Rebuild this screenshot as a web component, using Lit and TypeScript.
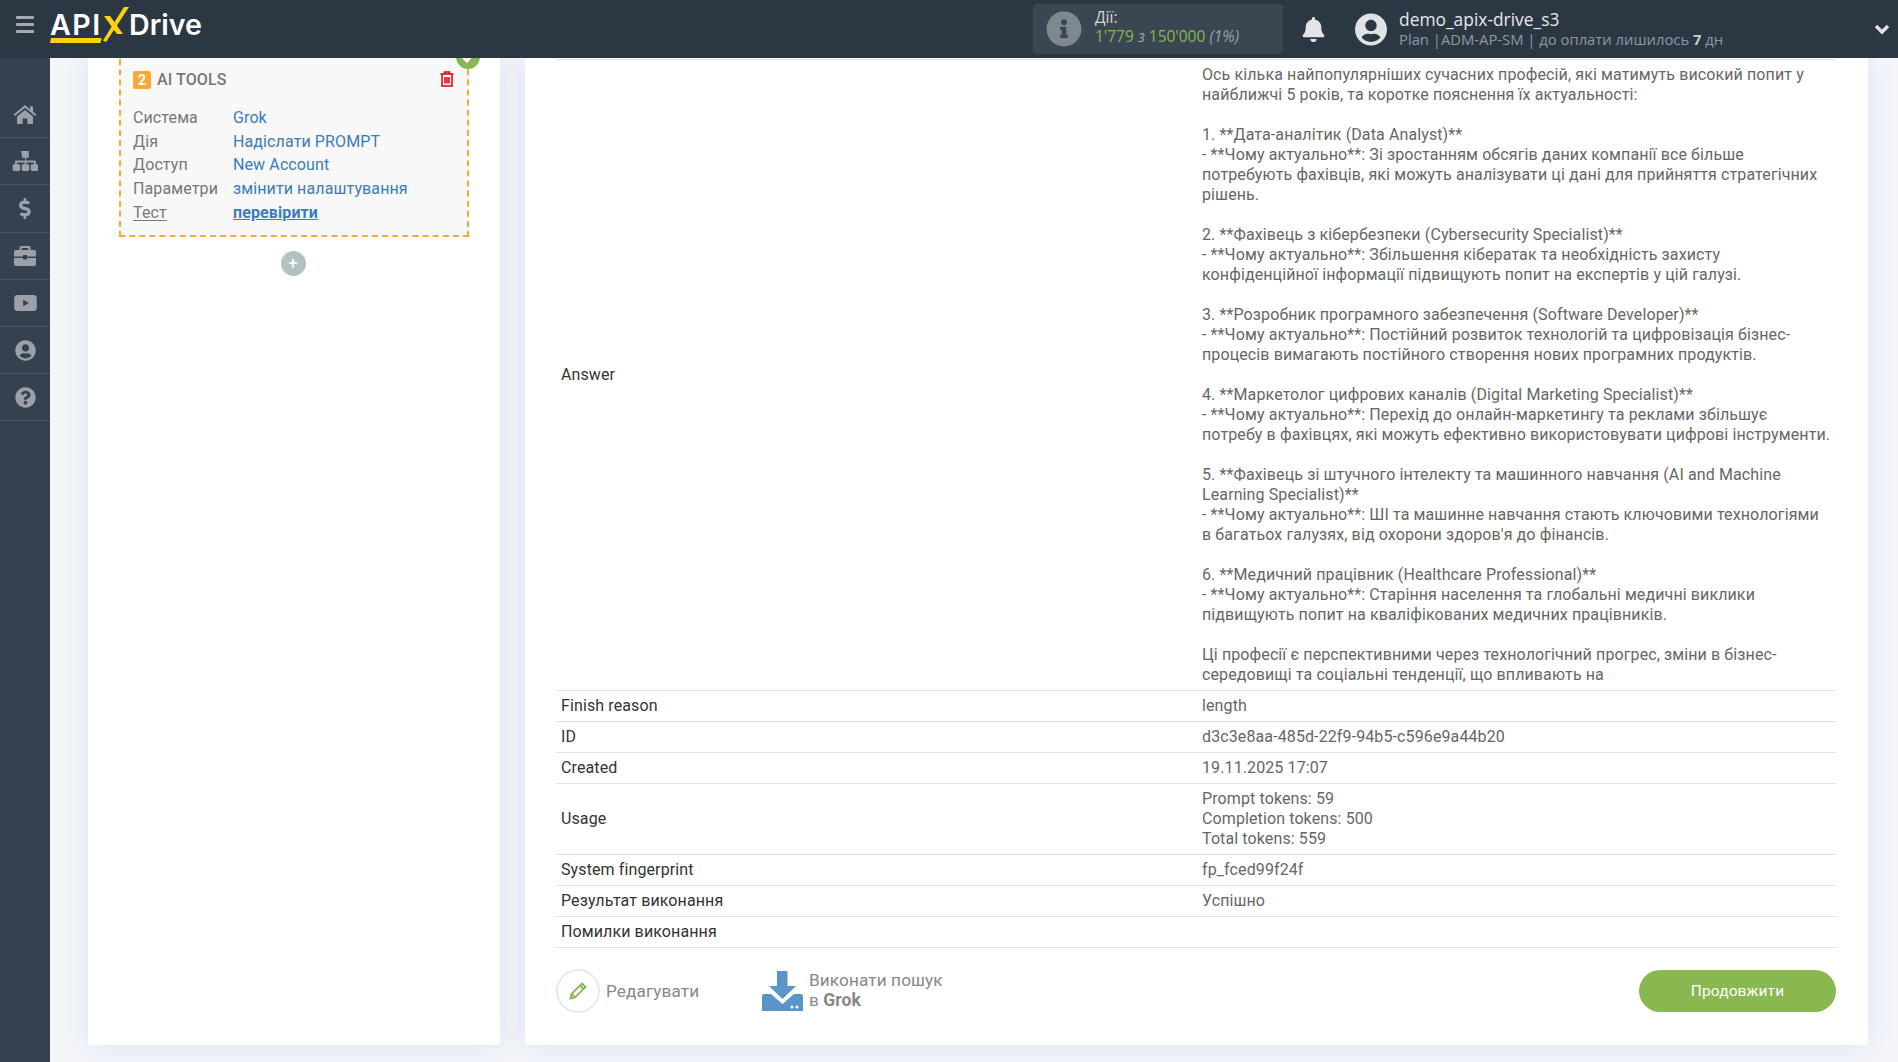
import { LitElement, html, css, svg } from 'lit';
import { customElement } from 'lit/decorators.js';

const ICONS: Record<string, { box: string; d: string }> = {
  home: {
    box: '0 0 24 20',
    d: 'M12 1L0.6 10.6l1.3 1.5L12 3.7l10.1 8.4 1.3-1.5-3.4-2.9V2.2h-3v3.4zM4 12.6V20h5.6v-5.6h4.8V20H20v-7.4l-8-6.7z',
  },
  sitemap: {
    box: '0 0 27 21',
    d: 'M9.5 0h8v7h-3v3h9a1.5 1.5 0 0 1 1.5 1.5V14h1a1.5 1.5 0 0 1 1.5 1.5v4a1.5 1.5 0 0 1-1.5 1.5h-5a1.5 1.5 0 0 1-1.5-1.5v-4a1.5 1.5 0 0 1 1.5-1.5h2v-2h-8v2h1.5a1.5 1.5 0 0 1 1.5 1.5v4a1.5 1.5 0 0 1-1.5 1.5h-5a1.5 1.5 0 0 1-1.5-1.5v-4a1.5 1.5 0 0 1 1.5-1.5h1.5v-2h-8v2h2a1.5 1.5 0 0 1 1.5 1.5v4a1.5 1.5 0 0 1-1.5 1.5h-5a1.5 1.5 0 0 1-1.5-1.5v-4a1.5 1.5 0 0 1 1.5-1.5h1v-2.5a1.5 1.5 0 0 1 1.5-1.5h9v-3h-3z',
  },
  dollar: {
    box: '0 0 320 512',
    d: 'M209.2 233.4l-108-31.6C88.7 198.2 80 186.5 80 173.5c0-16.3 13.2-29.5 29.5-29.5h66.3c12.2 0 24.2 3.7 34.2 10.5 6.1 4.1 14.3 3.1 19.5-2l34.8-34c7.1-6.9 6.1-18.4-1.8-24.5C238 74.8 207.4 64.1 176 64V16c0-8.8-7.2-16-16-16h-32c-8.8 0-16 7.2-16 16v48h-2.5C45.8 64-5.4 118.7.5 183.6c4.2 46.1 39.4 83.6 83.8 96.6l102.5 30c12.5 3.7 21.2 15.3 21.2 28.3 0 16.3-13.2 29.5-29.5 29.5h-66.3C100 368 88 364.3 78 357.5c-6.1-4.1-14.3-3.1-19.5 2l-34.8 34c-7.1 6.9-6.1 18.4 1.8 24.5 24.5 19.2 55.1 29.9 86.5 30v48c0 8.8 7.2 16 16 16h32c8.8 0 16-7.2 16-16v-48.2c46.6-.9 90.3-28.6 105.7-72.7 21.5-61.6-14.6-124.8-72.5-141.7z',
  },
  briefcase: {
    box: '0 0 22 20',
    d: 'M7 0h8a1.5 1.5 0 0 1 1.5 1.5V4H20a2 2 0 0 1 2 2v4.500H13v-1.500H9v1.500H0V6a2 2 0 0 1 2-2h3.500V1.500A1.500 1.500 0 0 1 7 0zm.6 2v2h6.800V2zM0 12h9v1.500h4V12h9v6a2 2 0 0 1-2 2H2a2 2 0 0 1-2-2z',
  },
  video: {
    box: '0 0 24 17',
    d: 'M3.500 0h17A3.500 3.500 0 0 1 24 3.500v10a3.500 3.500 0 0 1-3.500 3.500h-17A3.500 3.500 0 0 1 0 13.500v-10A3.500 3.500 0 0 1 3.500 0zM9.500 5v7l6-3.500z',
  },
  user: {
    box: '0 0 496 512',
    d: 'M248 8C111 8 0 119 0 256s111 248 248 248 248-111 248-248S385 8 248 8zm0 96c48.600 0 88 39.400 88 88s-39.400 88-88 88-88-39.400-88-88 39.400-88 88-88zm0 344c-58.700 0-111.300-26.600-146.500-68.200 18.800-35.400 55.600-59.800 98.500-59.800 2.400 0 4.800.4 7.100 1.100 13 4.200 26.600 6.900 40.900 6.900 14.300 0 28-2.700 40.900-6.900 2.300-.7 4.700-1.100 7.100-1.100 42.900 0 79.700 24.400 98.500 59.800C359.300 421.400 306.700 448 248 448z',
  },
  question: {
    box: '0 0 512 512',
    d: 'M504 256c0 136.997-111.043 248-248 248S8 392.997 8 256C8 119.083 119.043 8 256 8s248 111.083 248 248zM262.655 90c-54.497 0-89.255 22.957-116.549 63.758-3.536 5.286-2.353 12.415 2.715 16.258l34.699 26.310c5.205 3.947 12.621 3.008 16.665-2.122 17.864-22.658 30.113-35.797 57.303-35.797 20.429 0 45.698 13.148 45.698 32.958 0 14.976-12.363 22.667-32.534 33.976C247.128 238.528 216 254.941 216 296v4c0 6.627 5.373 12 12 12h56c6.627 0 12-5.373 12-12v-1.333c0-28.462 83.186-29.647 83.186-106.667 0-58.002-60.165-102-116.531-102zM256 338c-25.365 0-46 20.635-46 46 0 25.364 20.635 46 46 46s46-20.636 46-46c0-25.365-20.635-46-46-46z',
  },
  info: {
    box: '0 0 512 512',
    d: 'M256 8C119 8 8 119 8 256s111 248 248 248 248-111 248-248S393 8 256 8zm0 110a42 42 0 1 1 0 84 42 42 0 0 1 0-84zm56 254a12 12 0 0 1-12 12h-88a12 12 0 0 1-12-12v-24a12 12 0 0 1 12-12h12v-64h-12a12 12 0 0 1-12-12v-24a12 12 0 0 1 12-12h64a12 12 0 0 1 12 12v100h12a12 12 0 0 1 12 12z',
  },
  bell: {
    box: '0 0 448 512',
    d: 'M224 512c35.320 0 63.970-28.650 63.970-63.970H160.030C160.030 483.350 188.680 512 224 512zm215.390-149.710c-19.320-20.760-55.470-51.990-55.470-154.290 0-77.700-54.480-139.900-127.940-155.160V32c0-17.670-14.320-32-31.980-32s-31.980 14.330-31.980 32v20.840C118.560 68.100 64.080 130.300 64.080 208c0 102.300-36.150 133.530-55.470 154.290-6 6.450-8.660 14.160-8.610 21.710.11 16.400 12.980 32 32.100 32h383.800c19.120 0 32-15.600 32.100-32 .05-7.550-2.610-15.270-8.610-21.710z',
  },
};

const icon = (name: string, w: number, h: number) => html`
  <svg width=${w} height=${h} viewBox=${ICONS[name].box} fill="currentColor"><path d=${ICONS[name].d}></path></svg>
`;

const SIDE_ITEMS = [
  { name: 'home', w: 24, h: 20 },
  { name: 'sitemap', w: 26, h: 20 },
  { name: 'dollar', w: 13, h: 21 },
  { name: 'briefcase', w: 22, h: 20 },
  { name: 'video', w: 23, h: 16 },
  { name: 'user', w: 21, h: 21 },
  { name: 'question', w: 21, h: 21 },
];

const ANSWER = `Ось кілька найпопулярніших сучасних професій, які матимуть високий попит у найближчі 5 років, та коротке пояснення їх актуальності:

1. **Дата-аналітик (Data Analyst)**
- **Чому актуально**: Зі зростанням обсягів даних компанії все більше потребують фахівців, які можуть аналізувати ці дані для прийняття стратегічних рішень.

2. **Фахівець з кібербезпеки (Cybersecurity Specialist)**
- **Чому актуально**: Збільшення кібератак та необхідність захисту конфіденційної інформації підвищують попит на експертів у цій галузі.

3. **Розробник програмного забезпечення (Software Developer)**
- **Чому актуально**: Постійний розвиток технологій та цифровізація бізнес-процесів вимагають постійного створення нових програмних продуктів.

4. **Маркетолог цифрових каналів (Digital Marketing Specialist)**
- **Чому актуально**: Перехід до онлайн-маркетингу та реклами збільшує потребу в фахівцях, які можуть ефективно використовувати цифрові інструменти.

5. **Фахівець зі штучного інтелекту та машинного навчання (AI and Machine Learning Specialist)**
- **Чому актуально**: ШІ та машинне навчання стають ключовими технологіями в багатьох галузях, від охорони здоров'я до фінансів.

6. **Медичний працівник (Healthcare Professional)**
- **Чому актуально**: Старіння населення та глобальні медичні виклики підвищують попит на кваліфікованих медичних працівників.

Ці професії є перспективними через технологічний прогрес, зміни в бізнес-середовищі та соціальні тенденції, що впливають на`;

const ROWS = [
  ['Finish reason', 'length'],
  ['ID', 'd3c3e8aa-485d-22f9-94b5-c596e9a44b20'],
  ['Created', '19.11.2025 17:07'],
  ['Usage', 'Prompt tokens: 59\nCompletion tokens: 500\nTotal tokens: 559'],
  ['System fingerprint', 'fp_fced99f24f'],
  ['Результат виконання', 'Успішно'],
  ['Помилки виконання', ''],
];

@customElement('app-root')
export class AppRoot extends LitElement {
  static styles = css`
    :host {
      display: block;
      width: 1898px;
      height: 1062px;
      overflow: hidden;
      background: #f3f5fb;
      font-family: Roboto, 'Noto Sans', sans-serif;
      font-size: 16px;
      letter-spacing: 0.11px;
      line-height: 20px;
      color: #555;
    }

    /* top bar */
    .topbar {
      height: 58px;
      background: #2c3744;
      display: flex;
      align-items: center;
      position: relative;
      z-index: 2;
      font-family: 'Open Sans', sans-serif;
      letter-spacing: 0;
    }
    .burger {
      width: 18px;
      margin-left: 16px;
      margin-bottom: 10px;
      display: flex;
      flex-direction: column;
      gap: 4px;
    }
    .burger i {
      display: block;
      height: 3px;
      background: #a6abb1;
      border-radius: 1px;
    }
    .logo {
      margin-left: 16px;
      width: 155px;
      height: 44px;
      padding-bottom: 8px;
      box-sizing: border-box;
      display: flex;
      align-items: center;
      color: #fff;
      font-family: Inter, sans-serif;
      font-weight: 600;
      font-size: 28.6px;
      line-height: 34px;
      position: relative;
    }
    .logo .x {
      width: 26px;
      height: 36px;
      flex: none;
      align-self: flex-start;
    }
    .logo .api { width: 53px; letter-spacing: 1.5px; }
    .logo .under {
      position: absolute;
      left: 0;
      bottom: 8px;
    }
    .quota {
      margin-left: 828px;
      width: 250px;
      height: 50px;
      background: #3a4753;
      border-radius: 4px;
      display: flex;
      align-items: center;
      gap: 13px;
      padding-left: 13px;
      box-sizing: border-box;
      font-size: 15.5px;
      line-height: 19px;
      color: #d5d8db;
    }
    .quota span.ic { color: #7f888f; display: flex; }
    .quota .num { color: #86b84e; }
    .quota em { color: #99a1a8; }
    .quota .txt { padding-bottom: 5px; }
    .bell {
      margin-left: 19px;
      width: 23px;
      height: 25px;
      color: #e2e4e6;
    }
    .avatar {
      margin-left: 30px;
      width: 32px;
      height: 33px;
      color: #e0e2e4;
    }
    .account {
      margin-left: 12px;
      line-height: 20px;
    }
    .account .name { color: #e6e8ea; font-size: 17.4px; }
    .account .plan { color: #8f98a1; font-size: 14.8px; }
    .account .plan b { color: #c9cdd1; font-weight: 700; }
    .chevron {
      margin-left: auto;
      margin-right: 8px;
      color: #e0e2e4;
    }

    /* page under the bar */
    .body {
      display: flex;
      height: 1004px;
      overflow: hidden;
    }
    .sidebar {
      width: 50px;
      flex: none;
      background: #364150;
      padding-top: 33px;
      box-sizing: border-box;
    }
    .side-item {
      height: 47.2px;
      border-bottom: 1px solid #4a5562;
      box-sizing: border-box;
      display: flex;
      align-items: center;
      justify-content: center;
      color: #9aa1a9;
    }
    .main {
      flex: 1;
      display: flex;
      gap: 25px;
      padding: 0 30px 17px 38px;
      min-width: 0;
      height: 1004px;
      box-sizing: border-box;
    }
    .card {
      background: #fff;
      border-radius: 0 0 4px 4px;
      box-shadow: 0 0 30px rgba(60, 80, 120, 0.1);
      box-sizing: border-box;
    }
    .left {
      width: 412px;
      flex: none;
      padding: 0 31px;
    }
    .right {
      flex: 1;
      min-width: 0;
      padding: 1px 32px 0 31px;
      display: flex;
      flex-direction: column;
    }

    /* connection step */
    .step {
      margin-top: -9px;
      border: 2px dashed #ffa733;
      background: #f8f8f8;
      padding: 20px 12px 11px;
      position: relative;
    }
    .step-title {
      display: flex;
      align-items: center;
      height: 18px;
      margin-bottom: 17px;
      color: #777;
      font-weight: 500;
    }
    .badge {
      width: 18px;
      height: 18px;
      margin-right: 6px;
      border-radius: 2px;
      background: #ffa733;
      color: #fff;
      font-size: 14px;
      font-weight: 700;
      text-align: center;
      line-height: 18px;
    }
    .trash {
      margin-left: auto;
      margin-right: 1px;
      margin-bottom: 2px;
      display: flex;
    }
    .done {
      position: absolute;
      top: -6px;
      right: -13px;
      width: 24px;
      height: 24px;
      border-radius: 50%;
      background: #86b84e;
    }
    .params {
      display: grid;
      grid-template-columns: 100px 1fr;
      grid-auto-rows: 23.7px;
      align-items: center;
      color: #777;
    }
    .params .v { color: #3a7cbd; }
    .params u { text-underline-offset: 2px; }
    .params .test { font-weight: 700; color: #3a7cbd; text-decoration: underline; }
    .add {
      width: 25px;
      height: 25px;
      margin: 14px auto 0;
      border-radius: 50%;
      background: #b2c1c1;
      color: #fff;
      font-size: 16px;
      font-weight: 500;
      line-height: 25px;
      text-align: center;
      transform: translateX(-1px);
    }

    /* result table */
    table {
      width: 100%;
      border-collapse: collapse;
      table-layout: fixed;
    }
    tr { border-bottom: 1px solid #e2e2e2; }
    tr:first-child { border-top: 1px solid #e2e2e2; }
    td {
      padding: 5px;
      vertical-align: middle;
    }
    td.k { width: 631px; color: #333; }
    td.val { white-space: pre-line; color: #666; }

    .actions {
      display: flex;
      align-items: center;
      margin-top: 21px;
      height: 44px;
      color: #888;
      font-size: 17.2px;
    }
    .edit {
      display: flex;
      align-items: center;
      gap: 6px;
      width: 206px;
    }
    .pencil {
      width: 44px;
      height: 44px;
      box-sizing: border-box;
      border: 2px solid #e3ebe8;
      border-radius: 50%;
      display: flex;
      align-items: center;
      justify-content: center;
    }
    .run {
      display: flex;
      align-items: center;
      gap: 6px;
      line-height: 20px;
    }
    .run .txt { padding-bottom: 2px; }
    .run b { font-weight: 700; font-size: 17.5px; }
    .next {
      margin-left: auto;
      width: 197px;
      height: 42px;
      border-radius: 21px;
      background: #88b84f;
      color: #fff;
      font-size: 15.5px;
      font-weight: 400;
      display: flex;
      align-items: center;
      justify-content: center;
    }
  `;

  private renderTopbar() {
    return html`
      <div class="topbar">
        <div class="burger"><i></i><i></i><i></i></div>
        <div class="logo">
          <span class="api">API</span>
          <svg class="x" viewBox="0 0 26 36">
            ${svg`<path d="M0 33.500L21 0h5L3 35z" fill="#ffd400"></path>
            <path d="M1 9h6l13 18h-6z" fill="#ffd400"></path>`}
          </svg>
          <span>Drive</span>
          <svg class="under" width="52" height="5" viewBox="0 0 52 5">
            ${svg`<path d="M1 0h50.500l-1 5H0z" fill="#ffd400"></path>`}
          </svg>
        </div>
        <div class="quota">
          <span class="ic">${icon('info', 36, 36)}</span>
          <div class="txt">
            <div>Дії:</div>
            <div><span class="num">1'779</span> <em>з</em> <span class="num">150'000</span> <em>(1%)</em></div>
          </div>
        </div>
        <div class="bell">${icon('bell', 23, 25)}</div>
        <div class="avatar">${icon('user', 32, 33)}</div>
        <div class="account">
          <div class="name">demo_apix-drive_s3</div>
          <div class="plan">Plan |ADM-AP-SM | до оплати лишилось <b>7</b> дн</div>
        </div>
        <svg class="chevron" width="16" height="12" viewBox="0 0 16 12">
          ${svg`<path d="M2 3l6 6 6-6" fill="none" stroke="currentColor" stroke-width="3.500"></path>`}
        </svg>
      </div>
    `;
  }

  private renderStep() {
    return html`
      <div class="step">
        <div class="step-title">
          <span class="badge">2</span>AI TOOLS
          <span class="trash">
            <svg width="14" height="16" viewBox="0 0 14 16" fill="none" stroke="#d9000d" stroke-width="1.500">
              ${svg`<path d="M0.500 3h13M4.500 3V1h5v2M2 3v12h10V3M5 6v6.500M7 6v6.500M9 6v6.500"></path>`}
            </svg>
          </span>
        </div>
        <svg class="done" viewBox="0 0 24 24">
          ${svg`<path d="M7 12l4 4 7-8" fill="none" stroke="#fff" stroke-width="3"></path>`}
        </svg>
        <div class="params">
          <span>Система</span><span class="v">Grok</span>
          <span>Дія</span><span class="v">Надіслати PROMPT</span>
          <span>Доступ</span><span class="v">New Account</span>
          <span>Параметри</span><span class="v">змінити налаштування</span>
          <span><u>Тест</u></span><span class="test">перевірити</span>
        </div>
      </div>
      <div class="add">+</div>
    `;
  }

  render() {
    return html`
      ${this.renderTopbar()}
      <div class="body">
        <nav class="sidebar">
          ${SIDE_ITEMS.map((s) => html`<div class="side-item">${icon(s.name, s.w, s.h)}</div>`)}
        </nav>
        <div class="main">
          <section class="card left">${this.renderStep()}</section>
          <section class="card right">
            <table>
              <tr><td class="k">Answer</td><td class="val">${ANSWER}</td></tr>
              ${ROWS.map(([k, v]) => html`<tr><td class="k">${k}</td><td class="val">${v}</td></tr>`)}
            </table>
            <div class="actions">
              <div class="edit">
                <span class="pencil">
                  <svg width="20" height="20" viewBox="0 0 20 20" fill="none" stroke="#86b84e" stroke-width="1.800">
                    ${svg`<path d="M2.500 17.500l1-4.500L14 2.500l3.500 3.500L7 16.500zM12 4.500l3.500 3.500M3.500 13L7 16.500"></path>`}
                  </svg>
                </span>
                Редагувати
              </div>
              <div class="run">
                <svg width="41" height="40" viewBox="0 0 41 40" fill="#5b94c9">
                  ${svg`<path d="M15 0h10.500v15H34L20.500 28 7 15h8z"></path>
                  <path d="M2 23h7l11.500 10L32 23h7a2 2 0 0 1 2 2v15H0V25a2 2 0 0 1 2-2z"></path>
                  <circle cx="30" cy="36" r="1.500" fill="#fff"></circle>
                  <circle cx="35" cy="36" r="1.500" fill="#fff"></circle>`}
                </svg>
                <div class="txt">Виконати пошук<br />в <b>Grok</b></div>
              </div>
              <div class="next">Продовжити</div>
            </div>
          </section>
        </div>
      </div>
    `;
  }
}
